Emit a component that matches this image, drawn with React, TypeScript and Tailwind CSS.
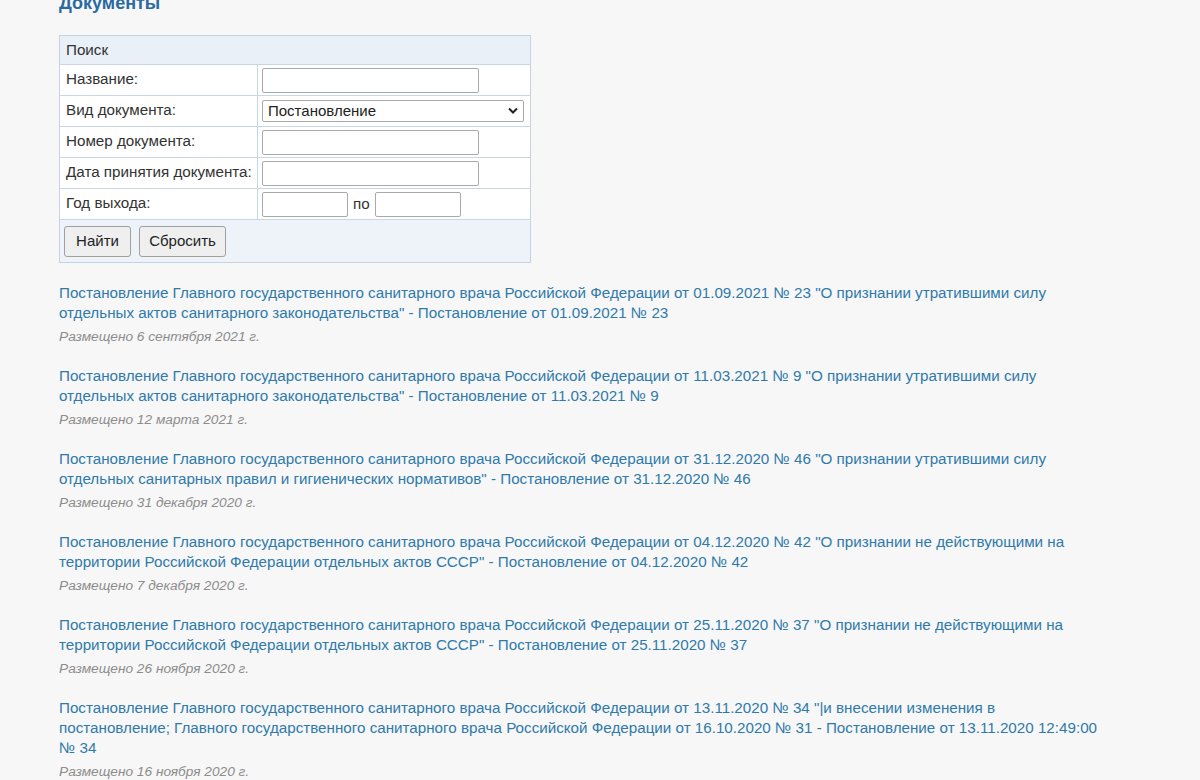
import React from 'react';

const docs = [
  {
    title:
      'Постановление Главного государственного санитарного врача Российской Федерации от 01.09.2021 № 23 "О признании утратившими силу отдельных актов санитарного законодательства" - Постановление от 01.09.2021 № 23',
    date: 'Размещено 6 сентября 2021 г.',
  },
  {
    title:
      'Постановление Главного государственного санитарного врача Российской Федерации от 11.03.2021 № 9 "О признании утратившими силу отдельных актов санитарного законодательства" - Постановление от 11.03.2021 № 9',
    date: 'Размещено 12 марта 2021 г.',
  },
  {
    title:
      'Постановление Главного государственного санитарного врача Российской Федерации от 31.12.2020 № 46 "О признании утратившими силу отдельных санитарных правил и гигиенических нормативов" - Постановление от 31.12.2020 № 46',
    date: 'Размещено 31 декабря 2020 г.',
  },
  {
    title:
      'Постановление Главного государственного санитарного врача Российской Федерации от 04.12.2020 № 42 "О признании не действующими на территории Российской Федерации отдельных актов СССР" - Постановление от 04.12.2020 № 42',
    date: 'Размещено 7 декабря 2020 г.',
  },
  {
    title:
      'Постановление Главного государственного санитарного врача Российской Федерации от 25.11.2020 № 37 "О признании не действующими на территории Российской Федерации отдельных актов СССР" - Постановление от 25.11.2020 № 37',
    date: 'Размещено 26 ноября 2020 г.',
  },
  {
    title:
      'Постановление Главного государственного санитарного врача Российской Федерации от 13.11.2020 № 34 "|и внесении изменения в постановление; Главного государственного санитарного врача Российской Федерации от 16.10.2020 № 31 - Постановление от 13.11.2020 12:49:00 № 34',
    date: 'Размещено 16 ноября 2020 г.',
  },
];

const inputCls = 'h-[25px] rounded-[2px] border border-[#a9a9a9] bg-white px-1 text-[15px] outline-none';

function Row({ label, children }: { label: string; children: React.ReactNode }) {
  return (
    <tr className="border-t border-[#c9d6e5]">
      <td className="h-[31px] w-[198px] border-r border-[#c9d6e5] pl-[6px] align-top pt-[3px]">{label}</td>
      <td className="px-[4px] align-middle">{children}</td>
    </tr>
  );
}

export default function App() {
  return (
    <div
      className="min-h-[780px] bg-[#f7f7f7] pl-[59px] text-[15.2px] text-[#333]"
      style={{ fontFamily: '"Liberation Sans", Arial, sans-serif' }}
    >
      <h1 className="-mt-[7px] text-[18px] font-bold leading-[20px] text-[#2a6a9f]">Документы</h1>

      <table className="mt-[22px] w-[472px] border-collapse border border-[#c4d3e4] bg-white">
        <tbody>
          <tr className="bg-[#eaf0f8]">
            <td colSpan={2} className="h-[29px] pl-[6px] pt-[1px]">
              Поиск
            </td>
          </tr>
          <Row label="Название:">
            <input className={`${inputCls} w-[217px]`} />
          </Row>
          <Row label="Вид документа:">
            <div className="relative w-[262px]">
              <select className="h-[22px] w-full appearance-none rounded-[2px] border border-[#a9a9a9] bg-white pl-[5px] text-[15px] leading-[20px] text-[#222] outline-none">
                <option>Постановление</option>
              </select>
              <svg
                className="pointer-events-none absolute right-[6px] top-[7px]"
                width="10"
                height="8"
                viewBox="0 0 10 8"
                fill="none"
              >
                <path d="M1 1.5l4 4 4-4" stroke="#222" strokeWidth="2" />
              </svg>
            </div>
          </Row>
          <Row label="Номер документа:">
            <input className={`${inputCls} w-[217px]`} />
          </Row>
          <Row label="Дата принятия документа:">
            <input className={`${inputCls} w-[217px]`} />
          </Row>
          <Row label="Год выхода:">
            <div className="flex items-center">
              <input className={`${inputCls} w-[86px]`} />
              <span className="mx-[5px]">по</span>
              <input className={`${inputCls} w-[86px]`} />
            </div>
          </Row>
          <tr className="border-t border-[#c9d6e5] bg-[#eef3f9]">
            <td colSpan={2} className="h-[43px] px-[4px]">
              <div className="flex gap-[8px]">
                <button className="h-[31px] w-[67px] rounded-[3px] border border-[#a0a0a0] bg-[#efefef] text-[15px] text-[#222]">
                  Найти
                </button>
                <button className="h-[31px] w-[87px] rounded-[3px] border border-[#a0a0a0] bg-[#efefef] text-[15px] text-[#222]">
                  Сбросить
                </button>
              </div>
            </td>
          </tr>
        </tbody>
      </table>

      <div className="mt-[20px] flex w-[1045px] flex-col gap-[20px]">
        {docs.map((d, i) => (
          <div key={i}>
            <a href="#" className="block leading-[20px] text-[#2f7aab]">
              {d.title}
            </a>
            <div className="mt-[5px] text-[13.7px] italic leading-[18px] text-[#8c8c8c]">{d.date}</div>
          </div>
        ))}
      </div>
    </div>
  );
}
